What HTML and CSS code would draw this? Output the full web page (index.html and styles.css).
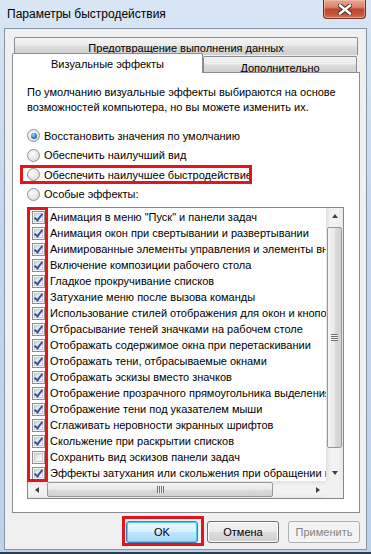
FILE: index.html
```html
<!DOCTYPE html>
<html lang="ru">
<head>
  <meta charset="UTF-8" />
  <title>Параметры быстродействия</title>
  <link rel="stylesheet" href="styles.css">
</head>
<body>

  <div class="window">
    <div class="titlebar">
      <span class="title">Параметры быстродействия</span>
      <div class="close">
        <svg width="14" height="11" viewBox="0 0 14 11">
          <path d="M2 1.5 L12 9.5 M12 1.5 L2 9.5" stroke="#4a2a26" stroke-width="4.4" stroke-linecap="square"/>
          <path d="M2 1.5 L12 9.5 M12 1.5 L2 9.5" stroke="#ffffff" stroke-width="2.4" stroke-linecap="square"/>
        </svg>
      </div>
    </div>

    <div class="client">
      <div class="tabs">
        <div class="tab tab-back">Предотвращение выполнения данных</div>
        <div class="tab-row">
          <div class="tab tab-active">Визуальные эффекты</div>
          <div class="tab tab-other">Дополнительно</div>
        </div>
      </div>

      <div class="panel">
        <p class="intro">По умолчанию визуальные эффекты выбираются на основе<br>возможностей компьютера, но вы можете изменить их.</p>

        <div class="radios">
          <div class="radio checked"><span class="dot"></span>Восстановить значения по умолчанию</div>
          <div class="radio"><span class="dot"></span>Обеспечить наилучший вид</div>
          <div class="radio marked"><span class="dot"></span>Обеспечить наилучшее быстродействие</div>
          <div class="radio"><span class="dot"></span>Особые эффекты:</div>
        </div>

        <div class="listbox">
          <div class="list-main">
            <div class="items">
              <div class="item"><span class="cb on"></span>Анимация в меню "Пуск" и панели задач</div>
              <div class="item"><span class="cb on"></span>Анимация окон при свертывании и развертывании</div>
              <div class="item"><span class="cb on"></span>Анимированные элементы управления и элементы внутри окна</div>
              <div class="item"><span class="cb on"></span>Включение композиции рабочего стола</div>
              <div class="item"><span class="cb on"></span>Гладкое прокручивание списков</div>
              <div class="item"><span class="cb on"></span>Затухание меню после вызова команды</div>
              <div class="item"><span class="cb on"></span>Использование стилей отображения для окон и кнопок</div>
              <div class="item"><span class="cb on"></span>Отбрасывание теней значками на рабочем столе</div>
              <div class="item"><span class="cb on"></span>Отображать содержимое окна при перетаскивании</div>
              <div class="item"><span class="cb on"></span>Отображать тени, отбрасываемые окнами</div>
              <div class="item"><span class="cb on"></span>Отображать эскизы вместо значков</div>
              <div class="item"><span class="cb on"></span>Отображение прозрачного прямоугольника выделения</div>
              <div class="item"><span class="cb on"></span>Отображение тени под указателем мыши</div>
              <div class="item"><span class="cb on"></span>Сглаживать неровности экранных шрифтов</div>
              <div class="item"><span class="cb on"></span>Скольжение при раскрытии списков</div>
              <div class="item"><span class="cb"></span>Сохранить вид эскизов панели задач</div>
              <div class="item"><span class="cb on"></span>Эффекты затухания или скольжения при обращении к меню</div>
            </div>
            <div class="vscroll">
              <div class="arrow"><span class="tri tri-up"></span></div>
              <div class="track">
                <div class="thumb"><span class="grip"></span></div>
              </div>
              <div class="arrow"><span class="tri tri-down"></span></div>
            </div>
          </div>
          <div class="hscroll">
            <div class="hbar">
              <div class="arrow"><span class="tri tri-left"></span></div>
              <div class="track">
                <div class="thumb"><span class="grip"></span></div>
              </div>
              <div class="arrow"><span class="tri tri-right"></span></div>
            </div>
            <div class="corner"></div>
          </div>
          <div class="mark-col"></div>
        </div>
      </div>

      <div class="buttons">
        <button class="btn btn-default">OK</button>
        <button class="btn">Отмена</button>
        <button class="btn" disabled>Применить</button>
      </div>
    </div>
  </div>

</body>
</html>
```

FILE: styles.css
```css
body {
  margin: 0;
  font-family: "Liberation Sans", Arial, sans-serif;
  font-size: 11px;
  color: #000;
}

.window {
  width: 371px;
  height: 554px;
  box-sizing: border-box;
  display: flex;
  flex-direction: column;
  padding-bottom: 2px;
  background: linear-gradient(to bottom, #d8e6f5, #c3d7ed 40%, #bcd2ea);
  border-bottom: 2px solid #2f3c4e;
}

/* title bar */
.titlebar {
  height: 28px;
  flex: none;
  display: flex;
  align-items: flex-start;
}

.title {
  margin: 7px 0 0 7px;
  font-size: 12px;
  line-height: 15px;
}

.close {
  margin-left: auto;
  margin-right: 5px;
  width: 43px;
  height: 19px;
  box-sizing: border-box;
  border: 1px solid #6e3028;
  border-top: none;
  border-radius: 0 0 4px 4px;
  background: linear-gradient(to bottom, #e7a794 0%, #d9826e 40%, #c0452f 52%, #c85538 80%, #d77a5c 100%);
  box-shadow: inset 0 0 0 1px rgba(255, 210, 190, 0.45);
  display: flex;
  align-items: center;
  justify-content: center;
}

/* client area */
.client {
  flex: 1;
  margin: 0 4px;
  border: 1px solid #8493a8;
  background: #f0f0f0;
  display: flex;
  flex-direction: column;
  padding: 8px 6px 0 7px;
}

.tab {
  box-sizing: border-box;
  border: 1px solid #898c95;
  border-bottom: none;
  border-radius: 2px 2px 0 0;
  text-align: center;
  background: linear-gradient(to bottom, #f3f3f3, #ebebeb 45%, #dcdcdc 50%, #cfcfcf);
}

.tab-back {
  margin: 0 2px;
  height: 18px;
  line-height: 20px;
}

.tab-row {
  display: flex;
  align-items: flex-end;
  height: 20px;
  margin-top: -2px;
}

.tab-active {
  position: relative;
  z-index: 2;
  width: 191px;
  height: 20px;
  line-height: 20px;
  background: #fff;
}

.tab-other {
  width: 154px;
  height: 17px;
  line-height: 22px;
}

/* tab page */
.panel {
  position: relative;
  margin-top: -1px;
  height: 441px;
  box-sizing: border-box;
  border: 1px solid #898c95;
  background: #fff;
  padding: 12px 15px 0 14px;
}

.intro {
  margin: 0;
  line-height: 15px;
}

.radios {
  margin-top: 11px;
}

.radio {
  position: relative;
  height: 19.5px;
  display: flex;
  align-items: center;
}

.dot {
  width: 13px;
  height: 13px;
  box-sizing: border-box;
  border-radius: 50%;
  border: 1px solid #8e8f8f;
  background: radial-gradient(circle at 40% 35%, #fdfdfd, #e4e4e4 60%, #cfcfcf);
  margin-right: 4px;
  flex: none;
  display: flex;
  align-items: center;
  justify-content: center;
}

.radio.checked .dot::after {
  content: "";
  width: 6px;
  height: 6px;
  border-radius: 50%;
  background: radial-gradient(circle at 40% 35%, #9bd4f6, #2a7cc0 55%, #0d3f7a);
}

.radio.marked::after {
  content: "";
  position: absolute;
  left: -7px;
  top: 0;
  width: 232px;
  height: 19px;
  box-sizing: border-box;
  border: 3px solid #e3141e;
}

/* list with checkboxes */
.listbox {
  position: relative;
  margin-top: 3px;
  border: 1px solid #828790;
  background: #fff;
}

.list-main {
  display: flex;
  height: 273px;
}

.items {
  flex: 1;
  overflow: hidden;
  padding-top: 1px;
}

.item {
  height: 16px;
  display: flex;
  align-items: center;
  white-space: nowrap;
  padding-left: 4px;
}

.cb {
  position: relative;
  flex: none;
  width: 13px;
  height: 13px;
  box-sizing: border-box;
  border: 1px solid #8e8f8f;
  background: #f6f6f6;
  margin-right: 5px;
}

.cb::before {
  content: "";
  position: absolute;
  left: 1px;
  top: 1px;
  right: 1px;
  bottom: 1px;
  border: 1px solid #c6cad0;
  background: linear-gradient(135deg, #d3d6da, #eef0f2 60%, #fdfdfd);
}

.cb.on::after {
  content: "";
  position: absolute;
  left: 3px;
  top: 0;
  width: 3px;
  height: 7px;
  border: solid #3b52a0;
  border-width: 0 2px 2px 0;
  transform: rotate(38deg);
}

.mark-col {
  position: absolute;
  left: -1px;
  top: -1px;
  width: 21px;
  height: 275px;
  box-sizing: border-box;
  border: 3px solid #e3141e;
}

/* scroll bars */
.vscroll {
  width: 17px;
  flex: none;
  display: flex;
  flex-direction: column;
  background: linear-gradient(to right, #e2e2e2, #f2f2f2 30%, #f2f2f2 70%, #e8e8e8);
}

.arrow {
  width: 17px;
  height: 17px;
  flex: none;
  display: flex;
  align-items: center;
  justify-content: center;
}

.vscroll .track {
  flex: 1;
  padding: 2px 1px 0 1px;
}

.vscroll .thumb {
  height: 221px;
}

.thumb {
  box-sizing: border-box;
  border: 1px solid #979797;
  border-radius: 2px;
  background: linear-gradient(to right, #f4f4f4, #e9e9e9 50%, #dadada 52%, #d2d2d2);
  display: flex;
  align-items: center;
  justify-content: center;
}

.vscroll .grip {
  width: 7px;
  height: 7px;
  background: repeating-linear-gradient(to bottom, #6f6f6f 0 1px, #f2f2f2 1px 2px);
}

.hscroll {
  display: flex;
  height: 17px;
}

.hbar {
  flex: 1;
  display: flex;
  background: linear-gradient(to bottom, #e2e2e2, #f2f2f2 30%, #f2f2f2 70%, #e8e8e8);
}

.hbar .track {
  flex: 1;
  padding: 1px 0 1px 2px;
}

.hbar .thumb {
  width: 226px;
  height: 15px;
  background: linear-gradient(to bottom, #f4f4f4, #e9e9e9 50%, #dadada 52%, #d2d2d2);
}

.hbar .grip {
  width: 7px;
  height: 7px;
  background: repeating-linear-gradient(to right, #6f6f6f 0 1px, #f2f2f2 1px 2px);
}

.corner {
  width: 17px;
  background: #f0f0f0;
}

.tri {
  width: 0;
  height: 0;
  border: 3.5px solid transparent;
}

.tri-up {
  border-bottom: 4px solid #404040;
  border-top-width: 0;
  margin-top: -1px;
}

.tri-down {
  border-top: 4px solid #404040;
  border-bottom-width: 0;
}

.tri-left {
  border-right: 4px solid #404040;
  border-left-width: 0;
}

.tri-right {
  border-left: 4px solid #404040;
  border-right-width: 0;
}

/* dialog buttons */
.buttons {
  display: flex;
  justify-content: flex-end;
  gap: 9px;
  margin-top: 8px;
}

.btn {
  width: 72px;
  height: 22px;
  font-family: inherit;
  font-size: 11px;
  color: #000;
  border: 1px solid #707070;
  border-radius: 3px;
  background: linear-gradient(to bottom, #f2f2f2, #ebebeb 50%, #dddddd 51%, #cfcfcf);
  box-shadow: inset 0 0 0 1px #fcfcfc;
  padding: 0;
}

.btn-default {
  position: relative;
  border-color: #3c7fb1;
  background: linear-gradient(to bottom, #eaf6fd, #d9f0fc 50%, #bee6fd 51%, #a7d9f5);
  box-shadow: inset 0 0 0 1px #48d2f8;
}

.btn-default::after {
  content: "";
  position: absolute;
  left: -5px;
  top: -6px;
  width: 82px;
  height: 30px;
  box-sizing: border-box;
  border: 3px solid #e3141e;
}

.btn:disabled {
  color: #838383;
  border-color: #adb2b5;
  background: #f4f4f4;
  box-shadow: none;
}
```
